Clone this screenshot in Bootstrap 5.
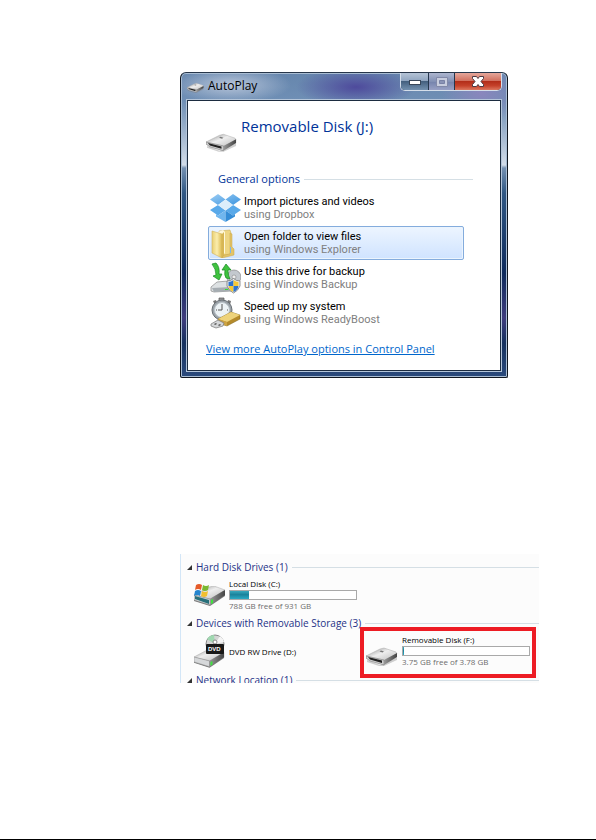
<!DOCTYPE html>
<html lang="en">
<head>
<meta charset="utf-8">
<meta name="viewport" content="width=device-width, initial-scale=1">
<title>AutoPlay</title>
<link href="https://cdn.jsdelivr.net/npm/bootstrap@5.3.0/dist/css/bootstrap.min.css" rel="stylesheet">
<style>
body{font-family:"Open Sans","Noto Sans",sans-serif;background:#fff;color:#000}
.page{padding:72px 57px 0 180px;border-bottom:1px solid #000}
.win{max-width:328px;padding:0 6px 6px;border:1px solid #10161f;border-top-color:#27364a;border-radius:6px 6px 2px 2px;
 background:radial-gradient(ellipse 60px 18px at 50px 12px,#c3cee0dd,transparent),radial-gradient(ellipse 60px 20px at 175px 14px,#4e4a9c,transparent),radial-gradient(ellipse 40px 30px at 300px 20px,#8a86bd,transparent),linear-gradient(180deg,#6686ad 0,#6f8fb5 28px,#a9bcd3 66px,#d3dde9 92px,#7591b2 95px,#315884 120px,#0d2a5c 200px,#3f3d7e 245px,#16315f 270px,#2b4b7d 100%);
 box-shadow:inset 0 0 0 1px #a9bdd3}
.titlebar{height:27px}
.title{font-size:12px;line-height:16px;margin-top:5px}
.controls{height:18px;border:1px solid #d4deea;border-top:0;border-radius:0 0 5px 5px;overflow:hidden;background:#25364d;gap:1px;margin-right:-1px}
.controls button{border:0;padding:0;width:27px;display:flex;align-items:center;justify-content:center;background:linear-gradient(#b4c3d6 0,#8fa4bf 48%,#44607f 50%,#7390af 100%)}
.controls .maxi{width:25px;background:linear-gradient(#aeb6cf,#8290b4 50%,#7583ac 52%,#99a1c5)}
.controls .close-win{width:46px;background:linear-gradient(#e5a79b 0,#d1705f 46%,#b32e1a 50%,#c5412a 75%,#dc7860 100%)}
.client{background:#fff;border:1px solid #1c2c40;outline:1px solid #b4c5d9;padding:14px 27px 13px 18px}
.device{font-size:15px;line-height:22px;color:#003399}
.device-icon{margin-top:16px}
.section{font-size:11px;line-height:16px;color:#003399;margin:16px 0 4px 12px}
.rule{height:1px;background:#d5dfe5}
.options{margin:0 9px 0 2px;gap:1px}
.option{height:34px;border:1px solid transparent;border-radius:2px;background:none;padding:0 1px;gap:3px;font-family:Roboto,"Liberation Sans",sans-serif;font-size:11px;line-height:13px;color:#000}
.option.active{border-color:#84acdd;background:linear-gradient(#edf5ff,#cfe3ff);box-shadow:inset 0 0 0 1px #ebf4fd}
.option small{font-size:11px;color:#808080}
.more{font-size:11px;line-height:16px;color:#0066cc;margin-top:11px}
.explorer{margin-top:176px;height:129px;overflow:hidden;background:#fcfcfc;border-left:1px solid #d3e6f7;padding:5px 0 0 6px}
.group{font-size:10px;line-height:16px;color:#1e3287;gap:4px}
.drives{font-size:8px;line-height:10px}
.drive-icon{width:42px;flex:none}
.cap{height:10px;border:1px solid #a9a9a9;background:#fff;margin:1px 0;width:128px}
.cap div{height:100%;background:linear-gradient(#37a8bd,#1b829b 45%,#2caac4)}
.free{color:#6d6d6d}
.marked{border:4px solid #ed1c24;width:176px;height:51px;margin:-4px 3px -6px 0;padding:0 0 0 2px;flex:none}
.marked svg{margin-top:14px}
</style>
<script src="https://cdn.jsdelivr.net/npm/bootstrap@5.3.0/dist/js/bootstrap.bundle.min.js"></script>
</head>
<body>
<svg width="0" height="0" class="d-block" aria-hidden="true">
<defs>
<linearGradient id="top" x1="0" y1="0" x2="1" y2="1"><stop offset="0" stop-color="#888"/><stop offset=".45" stop-color="#eee"/><stop offset="1" stop-color="#bbb"/></linearGradient>
<linearGradient id="face" x1="0" y1="0" x2="1" y2="0"><stop offset="0" stop-color="#999"/><stop offset="1" stop-color="#444"/></linearGradient>
<linearGradient id="gold" x1="0" y1="0" x2="1" y2="0"><stop offset="0" stop-color="#e9cf72"/><stop offset=".5" stop-color="#fbedad"/><stop offset="1" stop-color="#dcb94e"/></linearGradient>
<linearGradient id="blue" x1="0" y1="0" x2="1" y2="1"><stop offset="0" stop-color="#9ccdf4"/><stop offset="1" stop-color="#3b94df"/></linearGradient>
<symbol id="disk" viewBox="0 0 32 18">
<path d="M1 12 14 17 31 9v3L18 18H13L1 14z" fill="#777" opacity=".35"/>
<path d="M0 8 14 1 18 0 30 4 31 6 18 13 15 13z" fill="url(#top)" stroke="#aaa" stroke-width=".5"/>
<path d="M0 8 18 12V17L4 13 0 10z" fill="#d0d0d0" stroke="#777" stroke-width=".6"/>
<path d="M2 9 16 12.500V15L4 11.500z" fill="#222"/>
<path d="M18 12 31 5V9L18 17z" fill="url(#face)"/>
<path d="M15 2.500 18 3.500 16.500 4.500 13.500 3.500z" fill="#777"/>
</symbol>
<symbol id="drive" viewBox="0 0 32 20">
<path d="M0 10 15 2 20 1 31 5V10L16 20 0 15z" fill="#777"/>
<path d="M0 9 15 1 20 0 31 4 16 13z" fill="url(#top)" stroke="#aaa" stroke-width=".5"/>
<path d="M0 9 16 13V19L0 14z" fill="#d6d8da" stroke="#888" stroke-width=".5"/>
<path d="M16 13 31 4V9L16 19z" fill="url(#face)"/>
<path d="M17 14 19 13V17L17 18z" fill="#3fe43f"/>
</symbol>
</defs>
</svg>
<main class="page min-vh-100">
<section class="win" aria-label="AutoPlay">
 <header class="titlebar d-flex align-items-start">
  <svg class="mt-2" width="17" height="14"><use href="#disk"/></svg>
  <span class="title flex-grow-1 ms-1">AutoPlay</span>
  <div class="controls d-flex">
   <button type="button" aria-label="Minimize"><svg width="12" height="6"><rect x=".5" y="1.5" width="11" height="4" fill="#fff" stroke="#39475a"/></svg></button>
   <button type="button" class="maxi" aria-label="Maximize" disabled><svg width="12" height="10"><path d="M.5.5h11v9H.5z" fill="#c8cdde" stroke="#8289a8"/><path d="M3.5 3.5h5v3h-5z" fill="#8a93b5" stroke="#7982a5"/></svg></button>
   <button type="button" class="close-win" aria-label="Close"><svg width="12" height="11"><path d="M.5.5h4L6 2.5 7.500.5h4v2L9 5.500l2.500 3v2h-4L6 8.500l-1.500 2h-4v-2L3 5.500l-2.500-3z" fill="#fff" stroke="#4c3a42"/></svg></button>
  </div>
 </header>
 <div class="client">
  <div class="d-flex gap-1">
   <svg class="device-icon" width="31" height="24"><use href="#disk"/></svg>
   <div class="device">Removable Disk (J:)</div>
  </div>
  <div class="section d-flex align-items-center gap-1"><span>General options</span><span class="rule flex-grow-1"></span></div>
  <div class="options d-flex flex-column">
   <button type="button" class="option d-flex align-items-center text-start">
    <svg width="31" height="30" viewBox="0 0 31 30"><path d="M8 1 15.500 6.500 8 12 0 6.500zM23 1 31 6.500 23 12 15.500 6.500z" fill="url(#blue)"/><path d="M0 17 8 12 15.500 17.500 8 22.500zM15.500 17.500 23 12 31 17 23 22.500z" fill="#59a9e9"/><path d="M8 12 15.500 6.500 23 12 15.500 17.500z" fill="#dceefb"/><path d="M8 22.500 15.500 17.500V29L6 23.500V21z" fill="#70b6ee"/><path d="M23 22.500 15.500 17.500V29L25 23.500V21z" fill="#358dd7"/></svg>
    <span>Import pictures and videos<br><small>using Dropbox</small></span>
   </button>
   <button type="button" class="option active d-flex align-items-center text-start">
    <svg width="31" height="30" viewBox="0 0 31 30"><path d="M9 3 20 2 21 5V26L10 28z" fill="#eed683" stroke="#cbab4c" stroke-width=".5"/><path d="M8 4 13 2 15 4V25L13 27z" fill="#fff8d8"/><path d="M2 3 12 6V30L2 25z" fill="url(#gold)" stroke="#d1b25a" stroke-width=".6"/><path d="M12 6 14 4V28L12 30z" fill="#d7b654"/><path d="M20 5 22 6V19L24 21V27L12 30 14 27 20 26z" fill="#e3c468" stroke="#caa746" stroke-width=".5"/><path d="M20 19h1v6h-1z" fill="#7db6e8"/></svg>
    <span>Open folder to view files<br><small>using Windows Explorer</small></span>
   </button>
   <button type="button" class="option d-flex align-items-center text-start">
    <svg width="31" height="32" viewBox="0 0 31 32"><circle cx="24" cy="15" r="7" fill="#c3c8ce" stroke="#888" stroke-width=".7"/><circle cx="24" cy="15" r="2" fill="#eee" stroke="#777" stroke-width=".5"/><path d="M1 25 7 20 18 19 22 24 21 29 4 30 1 29z" fill="#dde1e3" stroke="#888" stroke-width=".7"/><path d="M2 26 21 25V29L4 30z" fill="#a6adb2"/><path d="M15 27h3v1h-3z" fill="#3d3"/><path d="M2 2 6 1Q10 5 9 12L12 12 9 18 3 14 6 13Q6 7 2 2z" fill="#3fc33f" stroke="#168821" stroke-width=".7"/><path d="M12 8 16 2 21 8 18 8Q18 14 20 17L16 16Q14 13 15 8z" fill="#3fc33f" stroke="#168821" stroke-width=".7"/><path d="M17 19Q21 19 23.500 16.500 26 19 30 19V24Q28 29 23.500 31 19 29 17 24z" fill="#e9edf1" stroke="#777" stroke-width=".8"/><path d="M18.500 20Q21 20 23.500 18v6h-5z" fill="#2b73cf"/><path d="M28.500 20Q26 20 23.500 18v6h5z" fill="#f5c836"/><path d="M18.500 24h5v6Q19 28 18.500 24z" fill="#f5c836"/><path d="M28.500 24h-5v6Q28 28 28.500 24z" fill="#2b73cf"/></svg>
    <span>Use this drive for backup<br><small>using Windows Backup</small></span>
   </button>
   <button type="button" class="option d-flex align-items-center text-start">
    <svg width="31" height="32" viewBox="0 0 31 32"><path d="M9 1h5v4H9z" fill="#999" stroke="#555" stroke-width=".7"/><path d="m3 4 3-1 1 3-2 2zM18 3l3 1-1 4-3-2z" fill="#777"/><circle cx="12" cy="13" r="10" fill="#9ba2a8" stroke="#686f75"/><circle cx="12" cy="13" r="7.500" fill="#edf3f6" stroke="#bdc6cc"/><path d="M12 8v5h-4M12 7v1M17 13h1M6 13h1" stroke="#555" fill="none"/><path d="M8 22 21 15 30 18V22L17 29 8 26z" fill="#b58b2b" stroke="#83661e" stroke-width=".5"/><path d="M8 22 21 15 30 18 17 25z" fill="#eed37b"/><path d="M8 22 17 25V29L8 26z" fill="#cda343"/><path d="M1 27 8 23 14 26 13 29 6 31 1 29z" fill="#d4d6d8" stroke="#777" stroke-width=".7"/><path d="m4 27 2-1 1 1-2 1zm4 1 2-1 1 1-2 1z" fill="#555"/></svg>
    <span>Speed up my system<br><small>using Windows ReadyBoost</small></span>
   </button>
  </div>
  <a class="more d-block" href="#">View more AutoPlay options in Control Panel</a>
 </div>
</section>

<section class="explorer" aria-label="Drives">
 <div class="group d-flex align-items-center"><svg width="5" height="5"><path d="M5 0v5H0z" fill="#333"/></svg><span>Hard Disk Drives (1)</span><span class="rule flex-grow-1"></span></div>
 <div class="drives d-flex pt-1 pb-1">
  <div class="drive-icon"><svg class="mt-1 ms-1" width="36" height="26" viewBox="0 0 36 26"><use href="#drive" x="3" y="3" width="32" height="20"/><path d="M4 13 18 17V21L4 16z" fill="#28707a"/><path d="M5 2Q8 0 11 2L10 7Q7 5 4 7z" fill="#e55b29"/><path d="M12 2Q15 4 18 2L17 7Q14 9 11 7z" fill="#7ab831"/><path d="M4 8Q7 6 10 8L9 13Q6 11 3 13z" fill="#2585cf"/><path d="M11 8Q14 10 17 8L16 13Q13 15 10 13z" fill="#f2bf30"/></svg></div>
  <div><div>Local Disk (C:)</div><div class="cap"><div style="width:15%"></div></div><div class="free">788 GB free of 931 GB</div></div>
 </div>
 <div class="group d-flex align-items-center"><svg width="5" height="5"><path d="M5 0v5H0z" fill="#333"/></svg><span>Devices with Removable Storage (3)</span><span class="rule flex-grow-1"></span></div>
 <div class="drives d-flex">
  <div class="drive-icon"><svg class="ms-1" width="36" height="38" viewBox="0 0 36 38"><use href="#drive" x="3" y="17" width="31" height="20"/><circle cx="24" cy="13" r="9" fill="#d4d4d4" stroke="#888"/><path d="M24 13 16 8Q19 4 23 4z" fill="#9fd8b0"/><path d="M24 13 29 5Q32 7 33 11z" fill="#f4f4f4"/><circle cx="24" cy="11" r="2" fill="#fff" stroke="#888"/><rect x="15" y="13" width="18" height="10" rx="1" fill="#181818"/><text x="17" y="20" font-size="6" font-weight="700" fill="#fff" font-family="Liberation Sans,sans-serif">DVD</text></svg></div>
  <div class="flex-grow-1 pt-3">DVD RW Drive (D:)</div>
  <div class="marked d-flex">
   <svg class="me-1" width="32" height="24"><use href="#disk"/></svg>
   <div class="pt-1"><div>Removable Disk (F:)</div><div class="cap"><div style="width:1%"></div></div><div class="free">3.75 GB free of 3.78 GB</div></div>
  </div>
 </div>
 <div class="group d-flex align-items-center"><svg width="5" height="5"><path d="M5 0v5H0z" fill="#333"/></svg><span>Network Location (1)</span><span class="rule flex-grow-1"></span></div>
</section>
</main>
</body>
</html>
